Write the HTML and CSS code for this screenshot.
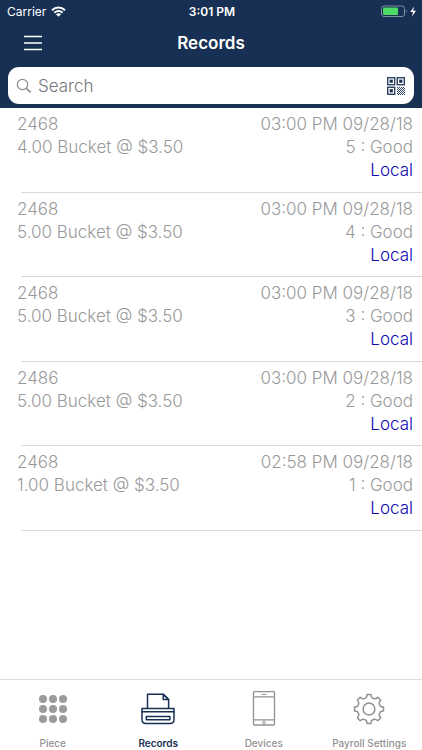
FILE: index.html
```html
<!DOCTYPE html>
<html lang="en">
<head>
<meta charset="utf-8">
<meta name="viewport" content="width=device-width, initial-scale=1">
<title>Records</title>
<link rel="stylesheet" href="styles.css">
</head>
<body>
<header class="top">
  <div class="status">
    <div class="carrier">
      <span>Carrier</span>
      <svg width="15" height="11" viewBox="0 0 15 11" aria-hidden="true">
        <g fill="none" stroke="#fff" stroke-width="2">
          <path d="M1 4.2C4.800.6 10.200.6 14 4.2"/>
          <path d="M3.400 6.700C5.700 4.500 9.300 4.500 11.600 6.700"/>
        </g>
        <path d="M5 8.300C6.400 7 8.600 7 10 8.300L7.500 10.800Z" fill="#fff"/>
      </svg>
    </div>
    <span class="clock">3:01 PM</span>
    <div class="power">
      <svg width="36" height="13" viewBox="0 0 36 13" aria-hidden="true">
        <rect x="0.500" y="1" width="23" height="10.500" rx="2.500" fill="none" stroke="#7f8da1"/>
        <rect x="2" y="2.500" width="15" height="7.500" rx="1" fill="#4cd964"/>
        <path d="M24.800 4.500C26 5 26 7.500 24.800 8Z" fill="#7f8da1"/>
        <path d="M33 1.500L29.300 7H32L31 11.500L35 5.700H32.200Z" fill="#fff"/>
      </svg>
    </div>
  </div>
  <div class="nav">
    <button class="menu" type="button" aria-label="Menu">
      <svg width="20" height="16" viewBox="0 0 20 16" aria-hidden="true">
        <path d="M1 1.500H19M1 8H19M1 14.500H19" stroke="#fff" stroke-width="1.300"/>
      </svg>
    </button>
    <h1>Records</h1>
  </div>
  <form class="search">
    <svg width="16" height="16" viewBox="0 0 16 16" aria-hidden="true">
      <g fill="none" stroke="#8a8a8f" stroke-width="1.200">
        <circle cx="6.500" cy="6.500" r="5.200"/>
        <path d="M10.300 10.300L14.800 14.500" stroke-width="1.700"/>
      </g>
    </svg>
    <input type="search" placeholder="Search" aria-label="Search">
    <button type="button" class="scan" aria-label="Scan code">
      <svg width="18" height="18" viewBox="0 0 18 18" aria-hidden="true">
        <g fill="none" stroke="#2c4263" stroke-width="1.400">
          <rect x="0.700" y="0.700" width="7" height="7"/>
          <rect x="10.300" y="0.700" width="7" height="7"/>
          <rect x="0.700" y="10.300" width="7" height="7"/>
        </g>
        <g fill="#173053">
          <rect x="2.600" y="2.600" width="3.200" height="3.200"/>
          <rect x="12.200" y="2.600" width="3.200" height="3.200"/>
          <rect x="2.600" y="12.200" width="3.200" height="3.200"/>
        </g>
        <path d="M10 10.500H18M10 12.500H18M10 14.500H18M10 16.500H18" stroke="#2c4263" stroke-dasharray="1 1"/>
        <path d="M11 11.500H18M11 13.500H18M11 15.500H18M11 17.500H18" stroke="#2c4263" stroke-dasharray="1 1"/>
      </svg>
    </button>
  </form>
</header>
<main>
  <ul class="records">
    <li><div class="piece"><p>2468</p><p>4.00 Bucket @ $3.50</p></div><div class="state"><p>03:00 PM 09/28/18</p><p>5 : Good</p><p class="local">Local</p></div></li>
    <li><div class="piece"><p>2468</p><p>5.00 Bucket @ $3.50</p></div><div class="state"><p>03:00 PM 09/28/18</p><p>4 : Good</p><p class="local">Local</p></div></li>
    <li><div class="piece"><p>2468</p><p>5.00 Bucket @ $3.50</p></div><div class="state"><p>03:00 PM 09/28/18</p><p>3 : Good</p><p class="local">Local</p></div></li>
    <li><div class="piece"><p>2486</p><p>5.00 Bucket @ $3.50</p></div><div class="state"><p>03:00 PM 09/28/18</p><p>2 : Good</p><p class="local">Local</p></div></li>
    <li><div class="piece"><p>2468</p><p>1.00 Bucket @ $3.50</p></div><div class="state"><p>02:58 PM 09/28/18</p><p>1 : Good</p><p class="local">Local</p></div></li>
  </ul>
</main>
<nav class="tabs" aria-label="Sections">
  <a href="#piece">
    <svg width="36" height="36" viewBox="0 0 36 36" aria-hidden="true">
      <g fill="#9c9c9c">
        <circle cx="8" cy="8" r="4"/><circle cx="18" cy="8" r="4"/><circle cx="28" cy="8" r="4"/>
        <circle cx="8" cy="18" r="4"/><circle cx="18" cy="18" r="4"/><circle cx="28" cy="18" r="4"/>
        <circle cx="8" cy="28" r="4"/><circle cx="18" cy="28" r="4"/><circle cx="28" cy="28" r="4"/>
      </g>
    </svg>
    <span>Piece</span>
  </a>
  <a href="#records" class="current" aria-current="page">
    <svg width="36" height="36" viewBox="0 0 36 36" aria-hidden="true">
      <g fill="none" stroke="#173053" stroke-width="1.500" stroke-linejoin="round">
        <path d="M7.500 18V3.200H23.200L28.600 8.500V18"/>
        <path d="M23.200 3.200V8.500H28.600Z"/>
        <path d="M2 17.500H34V20.800H2Z"/>
        <path d="M2 20.800V28.500Q2 32.500 6 32.500H30Q34 32.500 34 28.500V20.800"/>
        <rect x="6.300" y="25.500" width="23.600" height="3.200"/>
      </g>
    </svg>
    <span>Records</span>
  </a>
  <a href="#devices">
    <svg width="36" height="36" viewBox="0 0 36 36" aria-hidden="true">
      <g fill="none" stroke="#929292" stroke-width="1.300">
        <rect x="7.500" y="0.700" width="21" height="33.300" rx="0.800"/>
        <path d="M7.500 5.800H28.500M7.500 28.800H28.500"/>
        <path d="M15.500 3.400H20.500" stroke-width="1"/>
        <circle cx="18" cy="31.500" r="1.300" stroke-width="1"/>
      </g>
    </svg>
    <span>Devices</span>
  </a>
  <a href="#settings">
    <svg width="36" height="36" viewBox="0 0 36 36" aria-hidden="true">
      <g transform="translate(18 18)" fill="none" stroke="#929292" stroke-width="1.500" stroke-linejoin="round">
        <path d="M-2-14.500H2Q2-11.500 3.200-11.200Q4.800-10.200 5.700-10.200Q7-10.200 8.800-11.700L11.700-8.800Q10-7 10.200-5.700Q10.200-4.800 11.200-3.200Q11.500-2 14.500-2V2Q11.500 2 11.200 3.200Q10.200 4.800 10.200 5.700Q10 7 11.700 8.800L8.800 11.700Q7 10.200 5.700 10.200Q4.800 10.200 3.200 11.200Q2 11.500 2 14.500H-2Q-2 11.500-3.200 11.200Q-4.800 10.200-5.700 10.200Q-7 10.200-8.800 11.700L-11.700 8.800Q-10 7-10.200 5.700Q-10.200 4.800-11.200 3.200Q-11.500 2-14.500 2V-2Q-11.500-2-11.200-3.200Q-10.200-4.800-10.200-5.700Q-10-7-11.700-8.800L-8.800-11.700Q-7-10.200-5.700-10.200Q-4.800-10.200-3.200-11.200Q-2-11.500-2-14.500Z"/>
        <circle r="5.900"/>
      </g>
    </svg>
    <span>Payroll Settings</span>
  </a>
</nav>
</body>
</html>
```
FILE: styles.css
```css
* {
  box-sizing: border-box;
}

body {
  margin: 0;
  min-height: 100vh;
  display: flex;
  flex-direction: column;
  background: #fff;
  color: #999;
  font-family: Inter, "Liberation Sans", sans-serif;
}

h1,
p,
ul {
  margin: 0;
  padding: 0;
}

button {
  display: flex;
  padding: 0;
  border: 0;
  background: none;
}

.top {
  background: #173053;
  color: #fff;
  padding-bottom: 4px;
}

.status {
  display: grid;
  grid-template-columns: 1fr auto 1fr;
  align-items: center;
  height: 22px;
  padding: 0 5px 0 7px;
  font-size: 12px;
}

.carrier {
  display: flex;
  align-items: center;
  gap: 5px;
}

.clock {
  font-weight: 600;
}

.power {
  display: flex;
  justify-content: flex-end;
}

.nav {
  display: grid;
  grid-template-columns: 1fr auto 1fr;
  align-items: center;
  height: 45px;
  padding: 0 23px 3px;
}

h1 {
  font-size: 17px;
  line-height: 20px;
  font-weight: 600;
}

.search {
  display: flex;
  align-items: center;
  gap: 6px;
  height: 37px;
  margin: 0 8px;
  padding: 0 9px 0 8px;
  border-radius: 11px;
  background: #fff;
}

.search input {
  flex: 1;
  min-width: 0;
  padding: 0;
  border: 0;
  outline: 0;
  background: none;
  font: 300 17px/22px Inter, "Liberation Sans", sans-serif;
  color: #333;
}

.search input::placeholder {
  color: #76767b;
  opacity: 1;
}

main {
  flex: 1;
}

.records {
  display: grid;
  grid-auto-rows: 1fr;
  min-height: 423px;
  list-style: none;
  font-size: 17px;
  line-height: 23px;
  font-weight: 300;
}

.records li {
  display: flex;
  justify-content: space-between;
  padding: 5px 9px 0 17px;
  background: linear-gradient(#d9d9d9, #d9d9d9) 21px 100% / 100% 1px no-repeat;
}

.state {
  text-align: right;
}

.local {
  color: #0c08b4;
}

.tabs {
  display: grid;
  grid-template-columns: repeat(4, 1fr);
  border-top: 1px solid #dcdcdc;
  padding: 11px 0 0;
  height: 71px;
}

.tabs a {
  display: flex;
  flex-direction: column;
  align-items: center;
  gap: 8px;
  color: #929292;
  font-size: 10px;
  line-height: 16px;
  font-weight: 500;
  text-decoration: none;
  white-space: nowrap;
}

.tabs .current {
  color: #173053;
  font-weight: 600;
}
```
